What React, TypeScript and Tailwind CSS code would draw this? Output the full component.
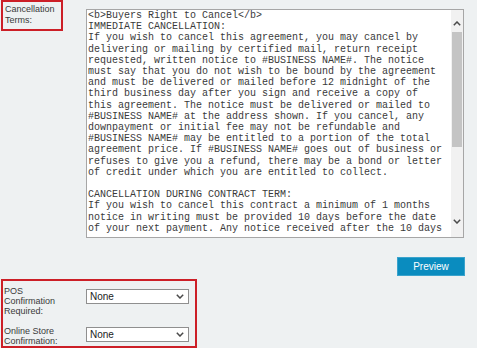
import React from "react";

const TERMS = `<b>Buyers Right to Cancel</b>
IMMEDIATE CANCELLATION:
If you wish to cancel this agreement, you may cancel by delivering or mailing by certified mail, return receipt requested, written notice to #BUSINESS NAME#. The notice must say that you do not wish to be bound by the agreement and must be delivered or mailed before 12 midnight of the third business day after you sign and receive a copy of this agreement. The notice must be delivered or mailed to #BUSINESS NAME# at the address shown. If you cancel, any downpayment or initial fee may not be refundable and #BUSINESS NAME# may be entitled to a portion of the total agreement price. If #BUSINESS NAME# goes out of business or refuses to give you a refund, there may be a bond or letter of credit under which you are entitled to collect.

CANCELLATION DURING CONTRACT TERM:
If you wish to cancel this contract a minimum of 1 months notice in writing must be provided 10 days before the date of your next payment. Any notice received after the 10 days`;

const Chevron = ({ up = false }: { up?: boolean }) => (
	<svg width="8" height="5" viewBox="0 0 8 5" className="block">
		<polyline
			points={up ? "0.8,4.2 4,1 7.2,4.2" : "0.8,0.8 4,4 7.2,0.8"}
			fill="none"
			stroke="#4a4a4a"
			strokeWidth="1.5"
		/>
	</svg>
);

const FakeSelect = ({ value }: { value: string }) => (
	<div className="flex h-[15px] w-[103px] items-center justify-between border border-[#8f8f8f] bg-white pr-[4px] pl-[3px] text-[10px] text-[#222]">
		<span className="leading-none">{value}</span>
		<Chevron />
	</div>
);

export default function App() {
	return (
		<div className="h-[348px] w-[477px] overflow-hidden bg-[#eef1f2] font-['Liberation_Sans',Arial,sans-serif] text-[#3a3a3a]">
			<div className="flex items-start">
				<div className="ml-px h-[31px] w-[62px] border-2 border-[#cc1f27] px-[2px] pt-[2px] text-[9px] leading-[11px]">
					Cancellation Terms:
				</div>
				<div className="mt-[9px] ml-[23px] flex h-[229px] w-[378px] border border-[#a6a6a6] bg-white">
					<div className="flex-1 overflow-hidden pr-[6px] pl-px">
						<div className="font-['Liberation_Mono','Courier_New',monospace] text-[10px] leading-[11.2px] break-words whitespace-pre-wrap text-[#3a3a3a]">
							{TERMS}
						</div>
					</div>
					<div className="flex w-[12px] flex-col bg-[#f1f1f1]">
						<div className="flex h-[22px] items-end justify-center pb-[6px]">
							<Chevron up />
						</div>
						<div className="mx-px h-[115px] bg-[#c4c4c4]" />
						<div className="flex-1" />
						<div className="flex h-[22px] items-start justify-center pt-[4px]">
							<Chevron />
						</div>
					</div>
				</div>
			</div>

			<div className="mt-[19px] flex justify-end pr-[12px]">
				<button className="h-[19px] w-[68px] border border-[#3aa3cc] bg-[#0a8cbf] text-[10px] text-white">
					Preview
				</button>
			</div>

			<div className="mt-[3px] ml-px h-[69px] w-[196px] border-2 border-[#cc1f27] pl-[1px] text-[9px] leading-[10px]">
				<div className="flex items-start">
					<div className="mt-[5px] w-[82px] pr-[14px]">POS Confirmation Required:</div>
					<div className="mt-[8px]">
						<FakeSelect value="None" />
					</div>
				</div>
				<div className="mt-[10px] flex items-start">
					<div className="w-[82px] pr-[14px]">Online Store Confirmation:</div>
					<div className="mt-px">
						<FakeSelect value="None" />
					</div>
				</div>
			</div>
		</div>
	);
}
